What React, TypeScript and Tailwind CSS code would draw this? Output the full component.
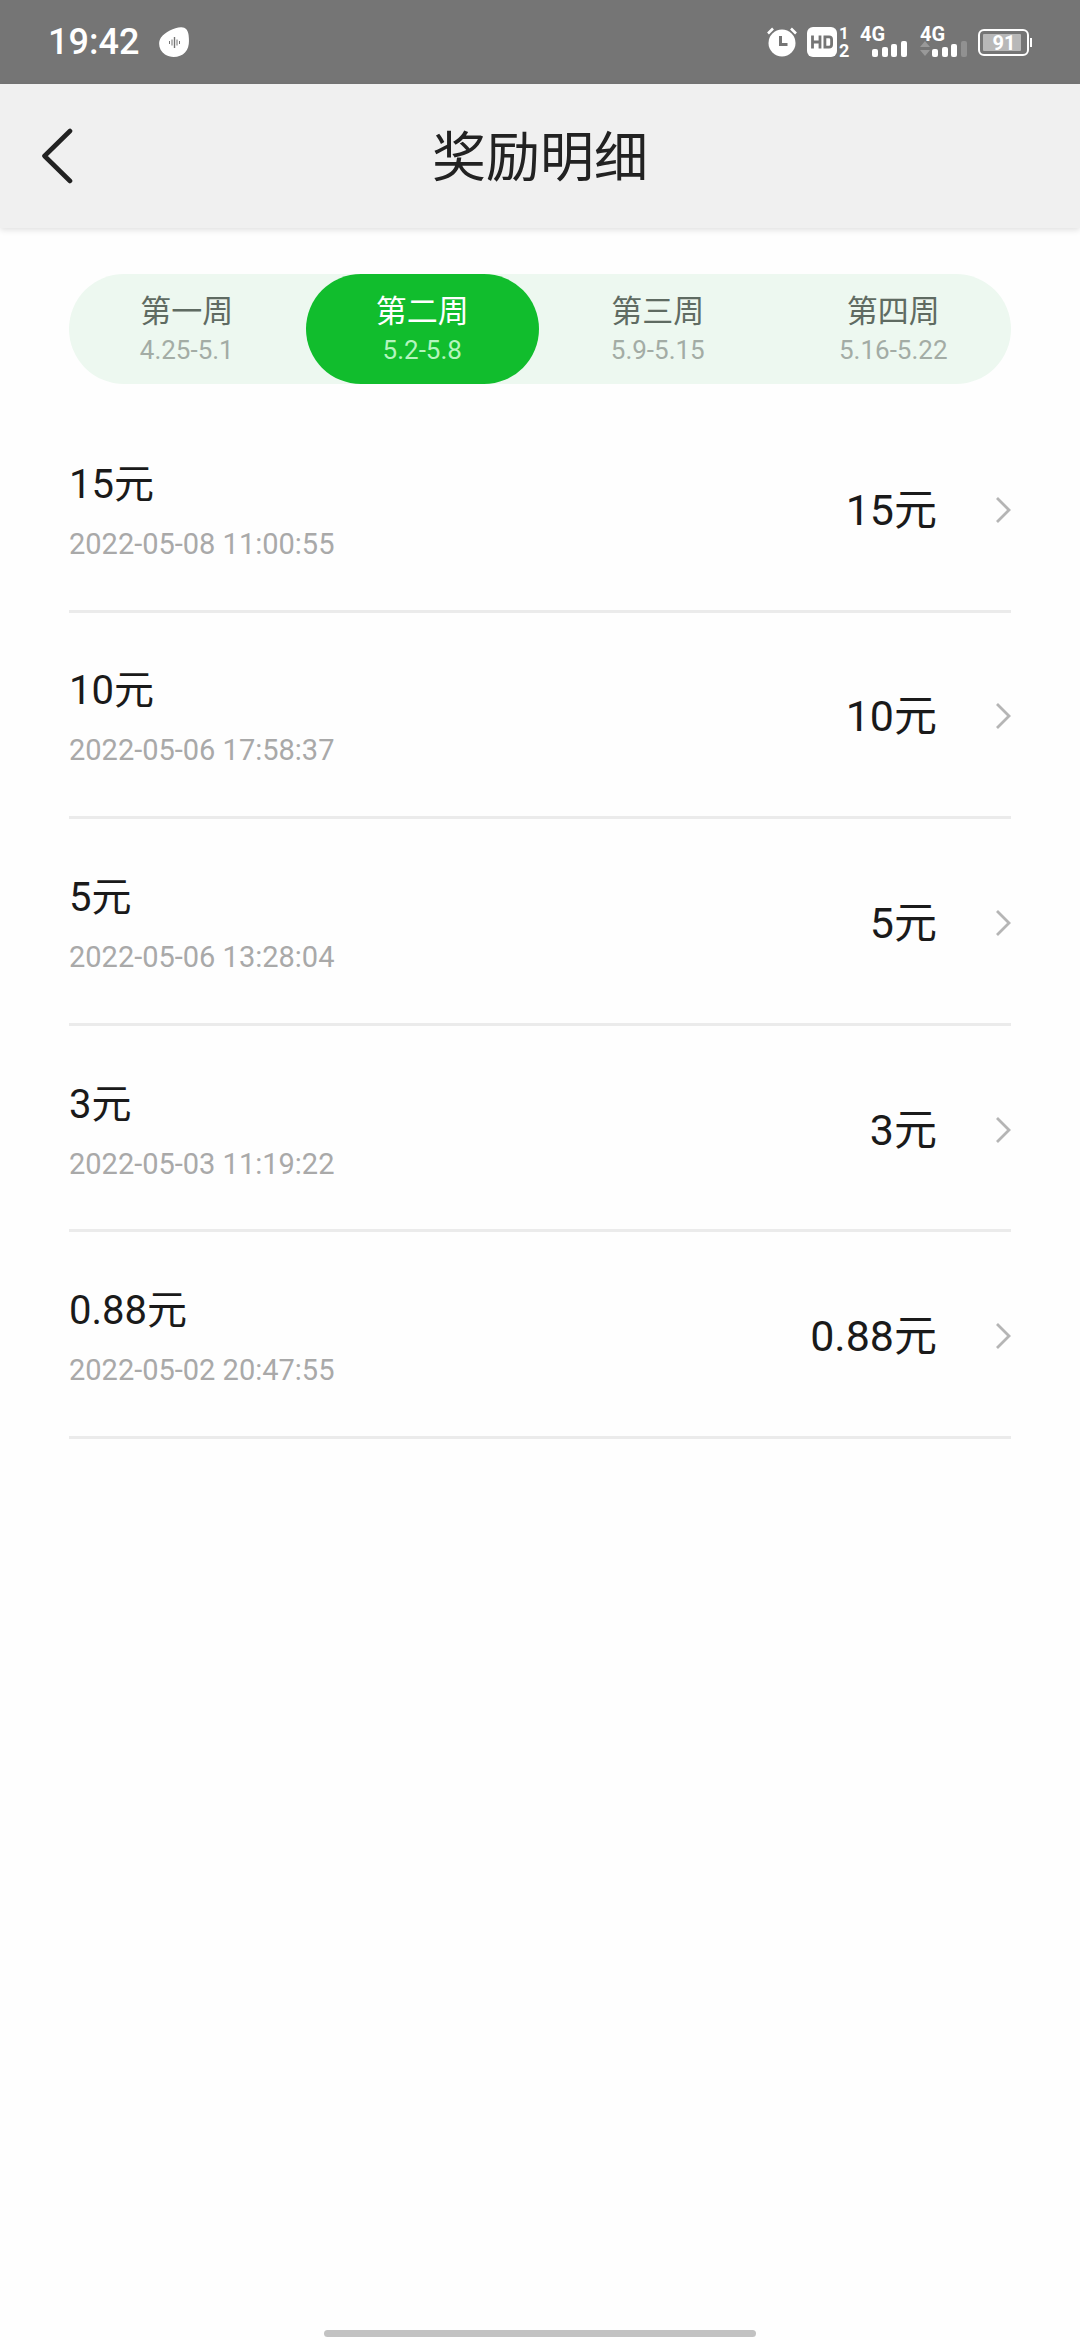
import React, { useState } from 'react';

const weeks = [
  { label: '第一周', range: '4.25-5.1' },
  { label: '第二周', range: '5.2-5.8' },
  { label: '第三周', range: '5.9-5.15' },
  { label: '第四周', range: '5.16-5.22' },
];

const rewards = [
  { amount: '15元', time: '2022-05-08 11:00:55' },
  { amount: '10元', time: '2022-05-06 17:58:37' },
  { amount: '5元', time: '2022-05-06 13:28:04' },
  { amount: '3元', time: '2022-05-03 11:19:22' },
  { amount: '0.88元', time: '2022-05-02 20:47:55' },
];

const AssistantIcon = () => (
  <svg width="30" height="30" viewBox="0 0 30 30" aria-hidden="true">
    <path
      d="M22 0.2C26.500 0 29 3 29.600 8C30.400 15 30.200 21 26 25.500C21.500 30.500 12 31.500 6 27.500C0 23.500-1.500 15.500 2 10.500C6 5 15 0.600 22 0.200Z"
      fill="#fff"
    />
    <path d="M10.500 14v3M13 12.500v6M18 12.500v6M20.500 14v3" stroke="#757575" strokeWidth="1" />
    <path d="M15.500 10v11" stroke="#757575" strokeWidth="1.400" />
  </svg>
);

const AlarmIcon = () => (
  <svg width="30" height="30" viewBox="0 0 30 30" aria-hidden="true">
    <circle cx="15" cy="16" r="13.500" fill="#fff" />
    <path d="M1 6.500L6 1.500M29 6.500L24 1.500" stroke="#fff" strokeWidth="2.600" />
    <path d="M13.500 9v8.500h7" fill="none" stroke="#757575" strokeWidth="3" />
  </svg>
);

const HdIcon = () => (
  <svg width="43" height="46" viewBox="0 -8 43 46" fontFamily="Roboto, sans-serif" fontWeight="700" aria-hidden="true">
    <rect width="30" height="30" rx="6" fill="#fff" />
    <path d="M5.500 8.500v13M13 8.500v13M5.500 15h7.500" fill="none" stroke="#757575" strokeWidth="2.800" />
    <path d="M17.900 9.900h4.100q2.600 0 2.600 2.600v5q0 2.600-2.600 2.600h-4.100z" fill="none" stroke="#757575" strokeWidth="2.800" />
    <text x="32" y="12" fontSize="17" fill="#fff">1</text>
    <text x="32" y="30" fontSize="18" fill="#fff">2</text>
  </svg>
);

const SignalIcon = ({ weak = false }: { weak?: boolean }) => (
  <svg width="48" height="46" viewBox="0 -8 48 46" fontFamily="Roboto, sans-serif" fontWeight="700" aria-hidden="true">
    <text x="0" y="14" fontSize="20" fill="#fff">4G</text>
    {weak && <path d="M0 20l5-6 5 6zM0 23l5 6 5-6z" fill="#999" />}
    <rect x="12" y="22" width="6" height="8" rx="2" fill="#fff" />
    <rect x="22" y="20" width="6" height="10" rx="2" fill="#fff" />
    <rect x="31" y="17" width="6" height="13" rx="2" fill="#fff" />
    <rect x="41" y="14" width="6" height="16" rx="2" fill={weak ? '#919191' : '#fff'} />
  </svg>
);

const BatteryIcon = () => (
  <svg width="54" height="27" viewBox="0 0 54 27" fontFamily="Roboto, sans-serif" aria-hidden="true">
    <rect x="1" y="1" width="49" height="25" rx="5" fill="none" stroke="#fff" strokeWidth="2" />
    <rect x="5" y="5" width="38" height="17" rx="1" fill="#b8b8b8" />
    <path d="M53 9v9" stroke="#fff" strokeWidth="2" />
    <text x="26" y="21" fontSize="20" fontWeight="700" fill="#fff" textAnchor="middle">91</text>
  </svg>
);

const App: React.FC = () => {
  const [active, setActive] = useState(1);

  return (
    <div className="min-h-screen flex flex-col bg-[#fefefe] font-['Roboto','Noto_Sans_CJK_SC',sans-serif]">
      {/* Status bar */}
      <div className="h-[84px] pl-12 pr-12 flex items-center justify-between bg-[#757575]">
        <div className="flex items-center gap-5 text-white">
          <span className="text-[36px] leading-[42px] font-medium">19:42</span>
          <AssistantIcon />
        </div>
        <div className="flex items-center gap-[10px]">
          <AlarmIcon />
          <HdIcon />
          <div className="flex items-center gap-3">
            <SignalIcon />
            <SignalIcon weak />
          </div>
          <BatteryIcon />
        </div>
      </div>

      {/* Header */}
      <header className="h-[144px] px-10 grid grid-cols-[1fr_auto_1fr] items-center bg-[#f0f0f0] shadow-[0_2px_6px_rgba(0,0,0,0.12)]">
        <button type="button" aria-label="返回" className="justify-self-start">
          <svg width="34" height="56" viewBox="0 0 34 56" fill="none" stroke="#222" strokeWidth="4.600" strokeLinecap="round" strokeLinejoin="round">
            <path d="M30 3L4.500 28L30 53" />
          </svg>
        </button>
        <h1 className="pt-1.5 text-[54px] leading-[72px] text-[#222]">奖励明细</h1>
      </header>

      <main className="px-[69px] pt-[46px]">
        {/* Weeks */}
        <div role="tablist" className="grid grid-cols-4 rounded-full bg-[#edf8f0]">
          {weeks.map((week, i) => (
            <button
              key={week.label}
              type="button"
              role="tab"
              aria-selected={i === active}
              onClick={() => setActive(i)}
              className={`h-[110px] mx-px flex flex-col items-center justify-center rounded-full ${
                i === active ? 'bg-[#11bd2d] text-white' : 'text-[#5f6b62]'
              }`}
            >
              <span className="text-[31px] leading-[42px]">{week.label}</span>
              <span className={`text-[26px] leading-[34px] ${i === active ? 'text-[#b4f5be]' : 'text-[#a3aca5]'}`}>
                {week.range}
              </span>
            </button>
          ))}
        </div>

        {/* Reward list */}
        <ul className="mt-[22px] min-h-[1033px] grid auto-rows-fr">
          {rewards.map((item) => (
            <li key={item.time} className="flex border-b-3 border-[#ebebeb]">
              <button type="button" className="flex-1 pt-1 flex items-center text-left text-[#1a1a1a]">
                <span className="flex-1 flex flex-col gap-2">
                  <span className="text-[40px] leading-[60px]">{item.amount}</span>
                  <span className="text-[29px] leading-[42px] text-[#a9a9a9]">{item.time}</span>
                </span>
                <span className="text-[43px] leading-[60px]">{item.amount}</span>
                <svg className="ml-[58px]" width="16" height="28" viewBox="0 0 16 28" fill="none" stroke="#b5b5b5" strokeWidth="2.800" aria-hidden="true">
                  <path d="M2 2L14 14L2 26" />
                </svg>
              </button>
            </li>
          ))}
        </ul>
      </main>

      {/* Home indicator */}
      <div className="mt-auto mb-[3px] w-2/5 h-[7px] self-center rounded-full bg-[#c2c2c2]" />
    </div>
  );
};

export default App;
